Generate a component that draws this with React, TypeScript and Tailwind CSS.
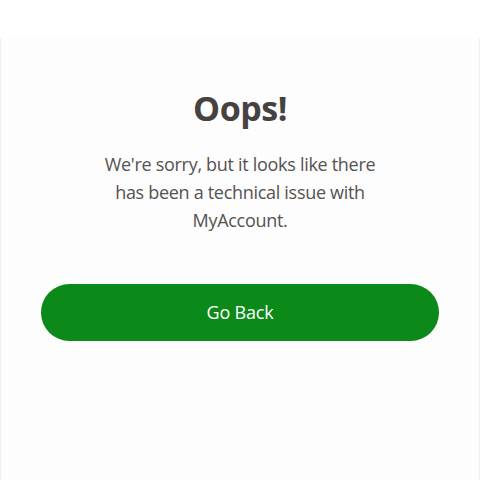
import React from 'react';

export default function App() {
  return (
    <div className="w-[480px] h-[480px] bg-white flex flex-col" style={{ fontFamily: '"Open Sans", "Noto Sans", sans-serif' }}>
      {/* top strip */}
      <div className="h-[38px] shrink-0 bg-white" />

      {/* error panel */}
      <div className="flex-1 bg-[#fdfdfd] border-x border-[#eeeeee] flex flex-col items-center px-10 pt-[48px]">
        <h1 className="text-[34px] leading-[44px] font-bold text-[#46423f] tracking-[-0.5px]">Oops!</h1>
        <p className="mt-[20px] w-[282px] text-center text-[18px] leading-[28px] text-[#555250] tracking-[-0.3px]">
          We're sorry, but it looks like there has been a technical issue with MyAccount.
        </p>
        <button className="mt-[50px] w-full h-[57px] rounded-full bg-[#0b8a1a] text-white text-[18px] tracking-[-0.2px]">
          Go Back
        </button>
      </div>
    </div>
  );
}
